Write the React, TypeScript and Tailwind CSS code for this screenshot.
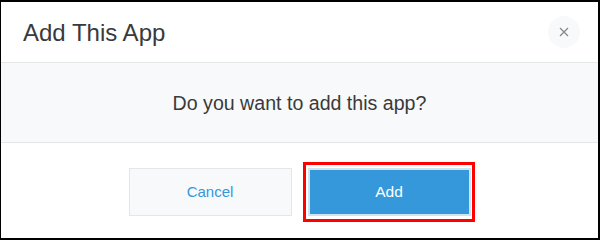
import React from "react";

export default function App() {
  return (
    <div
      className="w-[600px] h-[240px] bg-white border-black border-t-2 border-r-2 border-b-2 border-l flex flex-col"
      style={{ fontFamily: '"Liberation Sans", Arial, sans-serif' }}
    >
      <div className="h-[61px] shrink-0 flex items-center justify-between pl-[22px] pr-[18px] border-b border-[#e3e7e8]">
        <div className="text-[24px] text-[#3a3a3a] leading-none pt-[1px]">Add This App</div>
        <button className="w-8 h-8 rounded-full bg-[#f7f9fa] flex items-center justify-center">
          <svg width="12" height="12" viewBox="0 0 12 12">
            <path d="M2 2L10 10M10 2L2 10" stroke="#8a8a8a" strokeWidth="1.3" fill="none" />
          </svg>
        </button>
      </div>
      <div className="h-[80px] shrink-0 bg-[#f7f9fa] border-b border-[#e3e7e8] flex items-center justify-center">
        <div className="text-[19.6px] text-[#3a3a3a] leading-none pt-[2px]">Do you want to add this app?</div>
      </div>
      <div className="flex-1 flex items-center justify-center gap-4 pt-[3px]">
        <button className="w-[163px] h-[48px] bg-[#f7f9fa] border border-[#e3e7e8] text-[15px] text-[#3498db]">
          Cancel
        </button>
        <div className="relative">
          <button className="w-[163px] h-[48px] bg-[#3498db] border-2 border-[#d3e3ee] text-[15.5px] text-white">
            Add
          </button>
          <div className="absolute -left-[5px] -right-[4px] -top-[6px] -bottom-[6px] border-[3px] border-[#ff0000]" />
        </div>
      </div>
    </div>
  );
}
